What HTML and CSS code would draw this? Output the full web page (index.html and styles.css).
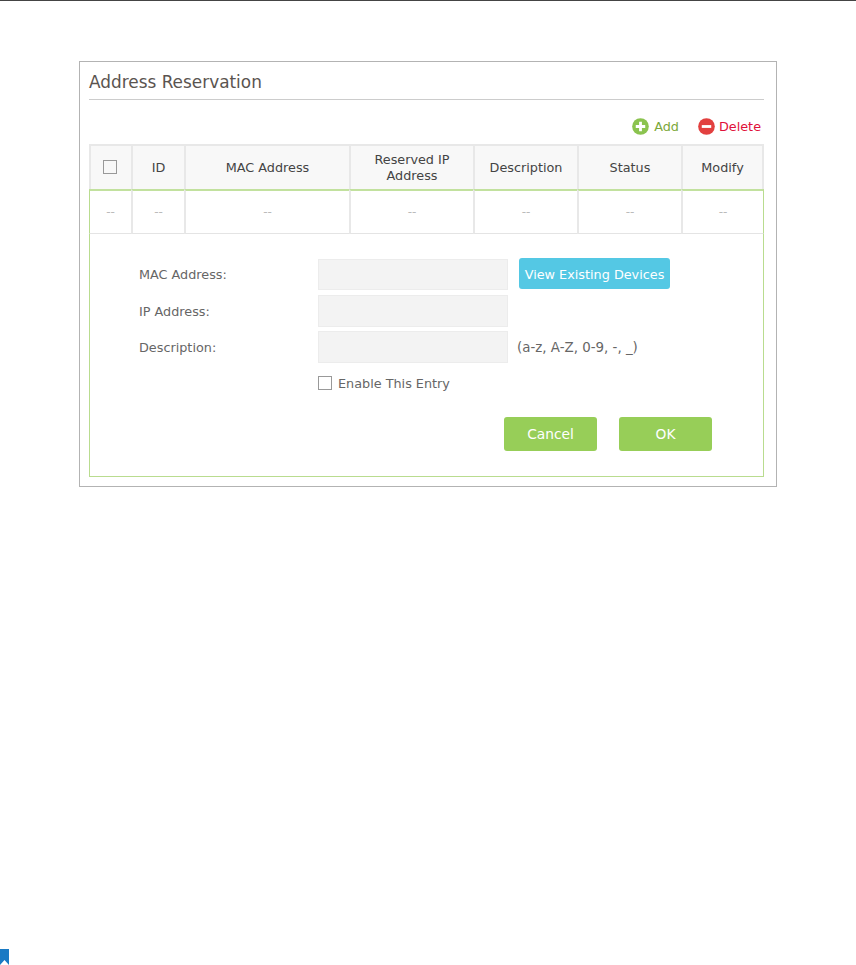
FILE: index.html
```html
<!DOCTYPE html>
<html lang="en">
<head>
<meta charset="utf-8">
<title>Address Reservation</title>
<link rel="stylesheet" href="styles.css">
</head>
<body>
<div class="topline"></div>
<section class="panel">
  <h2 class="title">Address Reservation</h2>
  <div class="actions">
    <span class="action add">
      <svg class="icon" viewBox="0 0 18 18"><circle cx="9" cy="9" r="8.8" fill="#8bc34f"/><path d="M9 4v10M4 9h10" stroke="#fff" stroke-width="3"/></svg>Add
    </span>
    <span class="action del">
      <svg class="icon" viewBox="0 0 18 18"><circle cx="9" cy="9" r="8.8" fill="#e2403f"/><path d="M4 9h10" stroke="#fff" stroke-width="3"/></svg>Delete
    </span>
  </div>
  <table class="grid">
    <colgroup>
      <col class="c1"><col class="c2"><col class="c3"><col class="c4"><col class="c5"><col class="c6"><col class="c7">
    </colgroup>
    <thead>
      <tr>
        <th><span class="check head-check"></span></th>
        <th>ID</th>
        <th>MAC Address</th>
        <th>Reserved IP<br>Address</th>
        <th>Description</th>
        <th>Status</th>
        <th>Modify</th>
      </tr>
    </thead>
    <tbody>
      <tr class="empty">
        <td>--</td><td>--</td><td>--</td><td>--</td><td>--</td><td>--</td><td>--</td>
      </tr>
      <tr class="editor">
        <td colspan="7">
          <div class="form">
            <label class="lbl lbl-first">MAC Address:</label>
            <div class="field field-first"></div>
            <button class="btn-view" type="button">View Existing Devices</button>
            <label class="lbl">IP Address:</label>
            <div class="field"></div>
            <span></span>
            <label class="lbl">Description:</label>
            <div class="field"></div>
            <span class="hint">(a-z, A-Z, 0-9, -, _)</span>
            <span></span>
            <div class="enable"><span class="check"></span>Enable This Entry</div>
          </div>
          <div class="buttons">
            <button class="btn" type="button">Cancel</button>
            <button class="btn" type="button">OK</button>
          </div>
        </td>
      </tr>
    </tbody>
  </table>
</section>
<div class="footer">
  <svg class="mark" viewBox="0 0 9 16"><path d="M0 0H9V16L4.5 11 0 16Z" fill="#1a7ac4"/></svg>
</div>
</body>
</html>
```

FILE: styles.css
```css
* { box-sizing: border-box; }
html, body { margin: 0; padding: 0; }
body {
  width: 856px;
  height: 965px;
  overflow: hidden;
  position: relative;
  background: #fff;
  font-family: "DejaVu Sans", Verdana, sans-serif;
  font-size: 12.8px;
  color: #555;
}
.topline { height: 1px; background: #444; }
.panel {
  width: 698px;
  height: 426px;
  margin: 60px 0 0 79px;
  border: 1px solid #b3b3b3;
  padding: 0 12px 0 9px;
}
.title {
  margin: 0;
  height: 38px;
  border-bottom: 1px solid #ccc;
  font-size: 16.9px;
  font-weight: 400;
  line-height: 41px;
  color: #5a5450;
}
.actions {
  display: flex;
  justify-content: flex-end;
  gap: 19px;
  height: 44px;
  padding: 17px 3px 0 0;
  line-height: 20px;
}
.action { display: inline-flex; align-items: center; gap: 5px; height: 20px; }
.add { color: #7ba83a; }
.del { color: #e0103a; gap: 4px; }
.icon { width: 17px; height: 17px; margin-bottom: 2px; }
.grid {
  border-collapse: separate;
  border-spacing: 0;
  table-layout: fixed;
  width: 675px;
}
.c1 { width: 42px; }
.c2 { width: 53px; }
.c3 { width: 165px; }
.c4 { width: 124px; }
.c5 { width: 104px; }
.c6 { width: 104px; }
.c7 { width: 83px; }
.grid th {
  height: 45px;
  padding: 0;
  background: #f8f8f8;
  border-top: 2px solid #e8e8e8;
  border-left: 2px solid #e8e8e8;
  font-weight: 400;
  font-size: 12.8px;
  line-height: 16px;
  color: #444;
  text-align: center;
}
.grid th:last-child { border-right: 2px solid #e8e8e8; }
.empty td {
  height: 45px;
  padding: 0;
  text-align: center;
  color: #bbb;
  font-size: 12px;
  border-top: 2px solid #c2e19e;
  border-left: 2px solid #e8e8e8;
  border-bottom: 1px solid #e4e4e4;
}
.empty td:first-child { border-left: 1px solid #b9dc8f; }
.empty td:last-child { border-right: 1px solid #b9dc8f; }
.editor td {
  height: 243px;
  padding: 0;
  border: 1px solid #b9dc8f;
  border-top: 0;
  vertical-align: top;
}
.form {
  display: grid;
  grid-template-columns: 179px 190px auto;
  grid-auto-rows: 32px;
  row-gap: 4px;
  align-items: center;
  padding: 25px 0 0 49px;
}
.lbl { color: #666; }
.lbl-first { align-self: start; line-height: 31px; }
.field {
  height: 32px;
  background: #f3f3f3;
  border: 1px solid #ececec;
}
.field-first { height: 31px; align-self: start; }
.btn-view {
  justify-self: start;
  align-self: start;
  margin: -1px 0 0 11px;
  width: 151px;
  height: 31px;
  padding: 1px 0 0;
  border: 0;
  border-radius: 3px;
  background: #54c8e4;
  color: #fff;
  font: 12.8px "DejaVu Sans", Verdana, sans-serif;
}
.hint { margin-left: 9px; color: #666; font-size: 13.4px; }
.check {
  display: inline-block;
  width: 14px;
  height: 14px;
  background: #fff;
  border: 1px solid #999;
}
.head-check { vertical-align: middle; position: relative; top: -1px; left: -1px; background: #f8f8f8; }
.enable {
  grid-column: 2 / 4;
  display: flex;
  align-items: center;
  gap: 6px;
  color: #666;
}
.buttons {
  display: flex;
  justify-content: flex-end;
  gap: 22px;
  padding: 18px 51px 0 0;
}
.btn {
  width: 93px;
  height: 34px;
  padding: 0;
  border: 0;
  border-radius: 3px;
  background: #97ce58;
  color: #fff;
  font: 13.8px "DejaVu Sans", Verdana, sans-serif;
}
.footer { position: absolute; left: 0; bottom: 0; line-height: 0; }
.mark { width: 9px; height: 16px; display: block; }
```
